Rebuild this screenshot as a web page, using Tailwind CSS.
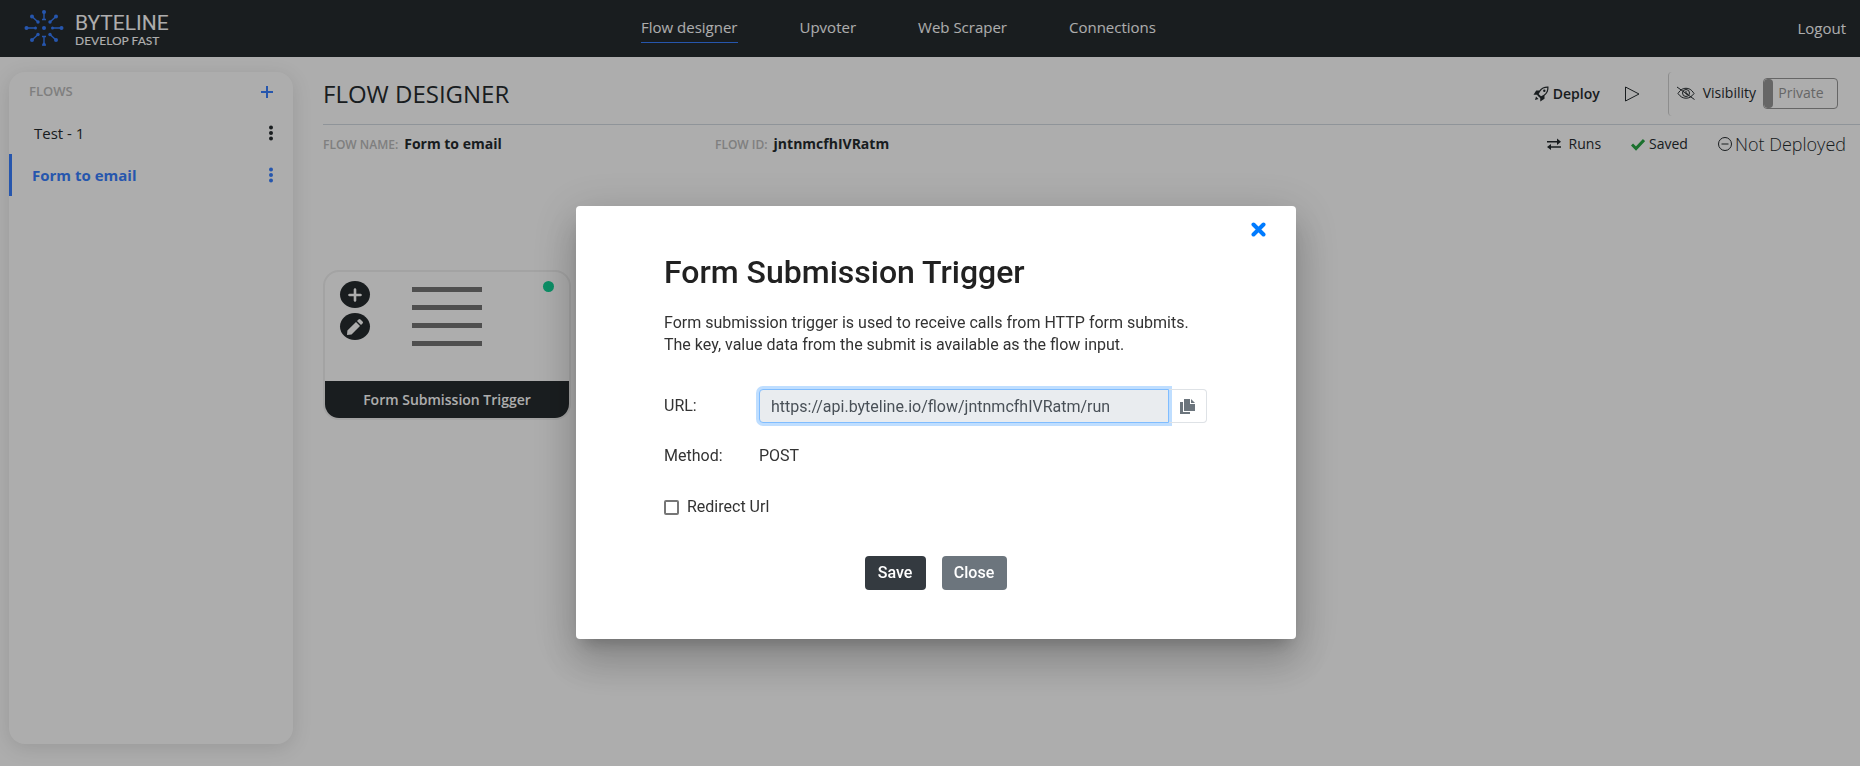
<!DOCTYPE html>
<html lang="en">
<head>
  <meta charset="UTF-8">
  <meta name="viewport" content="width=device-width, initial-scale=1">
  <title>Byteline - Flow Designer</title>
  <script src="https://cdn.jsdelivr.net/npm/@tailwindcss/browser@4"></script>
</head>
<body class="flex min-h-screen flex-col bg-white font-['Open_Sans','Noto_Sans',sans-serif] text-[#262c2f]">

  <!-- Top bar -->
  <header class="flex h-[57px] items-center bg-[#262c2f] text-[15px] font-medium text-white">
    <a href="#" class="flex w-1/3 items-center gap-[11px] pl-6" aria-label="Byteline">
      <svg class="h-10 w-10 text-[#387fff]" viewBox="0 0 40 40" fill="currentColor" stroke="currentColor" stroke-width="1.4">
        <g stroke="none">
          <circle cx="20" cy="19" r="2"/>
          <circle cx="20" cy="3" r="2"/><circle cx="20" cy="35" r="1.5"/>
          <circle cx="2.5" cy="19" r="2"/><circle cx="37.5" cy="19" r="2"/>
          <circle cx="8" cy="7.5" r="2"/><circle cx="32" cy="7.5" r="2"/>
          <circle cx="8" cy="31" r="2"/><circle cx="32" cy="31" r="2"/>
          <circle cx="11.5" cy="19" r="1.5"/><circle cx="28.5" cy="19" r="1.5"/>
          <circle cx="14" cy="13" r="1.7"/><circle cx="26" cy="13" r="1.7"/>
          <circle cx="14" cy="25.5" r="1.7"/><circle cx="26" cy="25.5" r="1.7"/>
        </g>
        <path d="M20 3v7M18 10.500h4M20 35v-7M18 27.500h4M18 36h4M2.500 19h9M28.500 19h9M8 7.500l6 5.500M32 7.500L26 13M8 31l6-5.500M32 31l-6-5.500"/>
      </svg>
      <span class="flex flex-col">
        <span class="font-['Roboto',sans-serif] text-[21px] leading-6 font-normal">BYTELINE</span>
        <span class="font-['Lato',sans-serif] text-xs leading-3">DEVELOP FAST</span>
      </span>
    </a>
    <nav class="flex gap-[62px] pt-0.5 pl-[21px]">
      <a href="#" class="border-b border-[#387fff] pb-1">Flow designer</a>
      <a href="#" class="pb-1">Upvoter</a>
      <a href="#" class="pb-1">Web Scraper</a>
      <a href="#" class="pb-1">Connections</a>
    </nav>
    <a href="#" class="ml-auto pr-3.5">Logout</a>
  </header>

  <div class="flex flex-1">
    <!-- Flow list -->
    <aside class="mt-[15px] mb-[22px] ml-[9px] w-[284px] shrink-0 rounded-2xl bg-white shadow-[0_4px_20px_rgba(0,0,0,0.12)]">
      <div class="flex h-10 items-center justify-between pr-5 pl-5">
        <h2 class="text-[13px] font-semibold text-[#bbb]">FLOWS</h2>
        <button type="button" aria-label="Add flow" class="text-[#387fff]">
          <svg class="h-3 w-3" viewBox="0 0 12 12" fill="none" stroke="currentColor" stroke-width="2"><path d="M6 0v12M0 6h12"/></svg>
        </button>
      </div>
      <ul>
        <li class="flex h-[42px] items-center justify-between pr-5 pl-[25px] text-[15px]">
          <a href="#">Test - 1</a>
          <button type="button" aria-label="Flow menu">
            <svg class="h-4 w-1" viewBox="0 0 4 16" fill="currentColor"><circle cx="2" cy="2.5" r="2"/><circle cx="2" cy="8" r="2"/><circle cx="2" cy="13.5" r="2"/></svg>
          </button>
        </li>
        <li class="flex h-[42px] items-center justify-between border-l-3 border-[#387fff] pr-5 pl-5 text-[15px] font-bold text-[#387fff]">
          <a href="#">Form to email</a>
          <button type="button" aria-label="Flow menu">
            <svg class="h-4 w-1" viewBox="0 0 4 16" fill="currentColor"><circle cx="2" cy="2.5" r="2"/><circle cx="2" cy="8" r="2"/><circle cx="2" cy="13.5" r="2"/></svg>
          </button>
        </li>
      </ul>
    </aside>

    <main class="ml-[30px] flex-1 pt-[15px]">
      <div class="flex h-[53px] items-start justify-between border-b border-[#d3dbe2] pr-[22px]">
        <h1 class="pt-1.5 text-2xl leading-8 font-medium">FLOW DESIGNER</h1>
        <div class="flex h-11 items-center text-sm">
          <button type="button" class="flex items-center gap-1 font-semibold">
            <svg class="h-4 w-4" viewBox="0 0 16 16" fill="currentColor"><path fill-rule="evenodd" d="M15.500.5C11.500.3 8.600 1.200 6.300 4.500H3.200L.5 8.700l3.600.1.600 1 1.500 1.500 1 .6.100 3.600 4.200-2.700V9.700C14.800 7.400 15.700 4.500 15.500.5zM14.300 1.700c0 3-1 5.200-3.800 7.200L8 10.300 5.700 8l1.500-2.600C9 2.600 11.300 1.700 14.300 1.700zM11.300 3.500a1.200 1.200 0 110 2.400 1.200 1.200 0 010-2.400zM3 10.500l2.500 2.500L2 14z"/></svg>
            Deploy
          </button>
          <button type="button" aria-label="Run flow" class="ml-6">
            <svg class="h-4 w-4" viewBox="0 0 16 16" fill="none" stroke="currentColor" stroke-width="1"><path stroke-linejoin="round" d="M1.500 1v14L15 8z"/></svg>
          </button>
          <div class="ml-7 flex h-11 items-center rounded border-l border-[#d0d0d0] pb-0.5 pl-2">
            <svg class="h-[18px] w-[18px]" viewBox="0 0 18 18" fill="none" stroke="currentColor"><path d="M1 9.500C3.500 5.500 6 4.300 9 4.300s5.500 1.200 8 5.200c-2.500 3.500-5 4.700-8 4.700S3.500 13 1 9.500zM0 3l17.500 12.500"/><circle cx="9" cy="9" r="3.500"/><path d="M9 7v3h2"/></svg>
            <span id="visibility" class="ml-2">Visibility</span>
            <button type="button" aria-labelledby="visibility" class="ml-[7px] flex h-[31px] w-[75px] overflow-hidden rounded border border-[#979797] text-sm text-[#979797]">
              <span class="h-full w-[9px] rounded bg-[#979797]"></span>
              <span class="flex-1 self-center pr-2 text-center">Private</span>
            </button>
          </div>
        </div>
      </div>

      <div class="flex h-[37px] items-center pr-3.5 text-sm">
        <dl class="flex w-[392px] items-baseline gap-1.5">
          <dt class="text-xs font-semibold text-[#bbb]">FLOW NAME:</dt>
          <dd class="font-bold">Form to email</dd>
        </dl>
        <dl class="flex items-baseline gap-1.5">
          <dt class="text-xs font-semibold text-[#bbb]">FLOW ID:</dt>
          <dd class="font-bold">jntnmcfhIVRatm</dd>
        </dl>
        <div class="ml-auto flex items-center">
          <a href="#" class="flex items-center gap-2">
            <svg class="h-[14px] w-[14px]" viewBox="0 0 14 14" fill="currentColor"><path d="M0 4h10V1.500L14 4.700 10 8V5.500H0zM14 10.800H4V13L0 10l4-3v2.300h10z"/></svg>
            Runs
          </a>
          <span class="ml-[30px] flex items-center gap-1">
            <svg class="h-[14px] w-[14px]" viewBox="0 0 14 14" fill="none" stroke="#28a745" stroke-width="3"><path d="M1 7.500l4 4L13 3"/></svg>
            Saved
          </span>
          <span class="ml-[30px] flex items-center gap-[3px] text-lg leading-5 font-light">
            <svg class="h-[14px] w-[14px]" viewBox="0 0 14 14" fill="none" stroke="currentColor"><circle cx="7" cy="7" r="6.5"/><path d="M3.500 7h7"/></svg>
            Not Deployed
          </span>
        </div>
      </div>

      <!-- Flow canvas -->
      <section class="pt-[108px]">
        <article class="w-[248px] overflow-hidden rounded-2xl border-2 border-[#f0f0f0]">
          <div class="flex h-[109px] items-start">
            <div class="ml-[15px] flex flex-col gap-[5px] pt-[9px]">
              <button type="button" aria-label="Add step" class="flex h-[27px] w-[30px] items-center justify-center rounded-[50%] bg-[#262c2f] text-white">
                <svg class="h-[14px] w-[14px]" viewBox="0 0 14 14" stroke="currentColor" stroke-width="2.6" stroke-linecap="round"><path d="M7 1.500v11M1.500 7h11"/></svg>
              </button>
              <button type="button" aria-label="Edit step" class="flex h-[27px] w-[30px] items-center justify-center rounded-[50%] bg-[#262c2f] text-white">
                <svg class="h-4 w-4" viewBox="0 0 16 16" fill="currentColor"><path d="M0 16l.4-4.500L9 3l4 4-8.500 8.500zM10 2l1.500-1.500q1-1 2 0l2 2q1 1 0 2L14 6z"/></svg>
              </button>
            </div>
            <div class="ml-[42px] flex flex-col gap-[13px] pt-[15px]">
              <span class="h-[5px] w-[70px] bg-[#757575]"></span>
              <span class="h-[5px] w-[70px] bg-[#757575]"></span>
              <span class="h-[5px] w-[70px] bg-[#757575]"></span>
              <span class="h-[5px] w-[70px] bg-[#757575]"></span>
            </div>
            <span class="mt-[9px] mr-[15px] ml-auto h-[11px] w-[11px] rounded-full bg-[#12d296]"></span>
          </div>
          <h3 class="flex h-[37px] items-center justify-center bg-[#262c2f] text-sm font-semibold text-white">Form Submission Trigger</h3>
        </article>
      </section>
    </main>
  </div>

  <!-- Trigger dialog -->
  <div class="fixed inset-0 flex items-start justify-center bg-black/32 pt-[206px] pl-3">
    <form role="dialog" aria-labelledby="dialog-title" class="relative w-[720px] rounded bg-white pt-12 pr-[89px] pb-[49px] pl-[88px] font-['Roboto',sans-serif] text-[#333] shadow-[0_11px_15px_-7px_rgba(0,0,0,0.2),0_24px_38px_3px_rgba(0,0,0,0.14),0_9px_46px_8px_rgba(0,0,0,0.12)]">
      <button type="button" aria-label="Close dialog" class="absolute top-4 right-[30px] text-[#007bff]">
        <svg class="h-[15px] w-[15px]" viewBox="0 0 15 15" stroke="currentColor" stroke-width="4" stroke-linecap="round"><path d="M2.500 2.500l10 10M12.500 2.500l-10 10"/></svg>
      </button>
      <h2 id="dialog-title" class="text-[32px] leading-9 font-medium text-[#212121]">Form Submission Trigger</h2>
      <p class="mt-[22px] text-base leading-[22px]">Form submission trigger is used to receive calls from HTTP form submits.<br>The key, value data from the submit is available as the flow input.</p>
      <div class="mt-[33px] flex h-[34px] items-center">
        <label for="url" class="w-[95px]">URL:</label>
        <input id="url" type="text" readonly value="https://api.byteline.io/flow/jntnmcfhIVRatm/run" class="h-full min-w-0 flex-1 rounded-l border border-[#80bdff] bg-[#e9ecef] px-[11px] text-[#495057] ring-3 ring-[#bfdeff] outline-none">
        <button type="button" aria-label="Copy URL" class="flex h-full w-[38px] items-center rounded-r border border-l-0 border-[#dee2e6] pl-[11px] text-[#6c757d]">
          <svg class="h-[15px] w-[15px]" viewBox="0 0 15 15" fill="currentColor"><path d="M4 0h6v5h5v7H4zM11 0l4 4h-4zM0 3h3v10h7v2H0z"/></svg>
        </button>
      </div>
      <div class="mt-[21px] flex leading-6">
        <span class="w-[95px]">Method:</span>
        <span>POST</span>
      </div>
      <div class="mt-[27px] flex items-center gap-2 leading-6">
        <input id="redirect" type="checkbox" class="h-[15px] w-[15px] appearance-none rounded-xs border-2 border-[#767676]">
        <label for="redirect">Redirect Url</label>
      </div>
      <div class="mt-[37px] flex justify-center gap-4 font-medium text-white">
        <button type="submit" class="h-[34px] w-[61px] rounded bg-[#343a40]">Save</button>
        <button type="button" class="h-[34px] w-[65px] rounded bg-[#6c757d]">Close</button>
      </div>
    </form>
  </div>

</body>
</html>
